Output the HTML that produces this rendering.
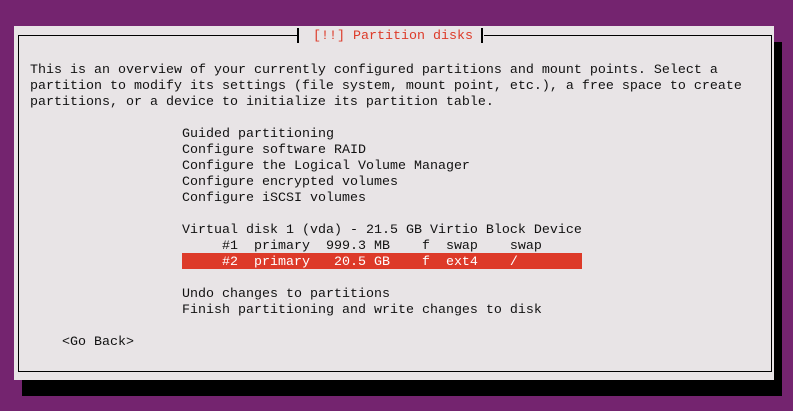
<!DOCTYPE html>
<html><head><meta charset="utf-8"><style>
*{margin:0;padding:0}
body{width:793px;height:411px;background:#74246f;position:relative;overflow:hidden;font-family:"Liberation Mono","DejaVu Sans Mono",monospace;font-size:13.33px;color:#111}
.sh{position:absolute;left:22px;top:42px;width:760px;height:354px;background:#000}
.pn{position:absolute;left:14px;top:26px;width:760px;height:354px;background:#e8e4e6}
.bd{position:absolute;left:18px;top:35px;width:752px;height:335px;border:1px solid #000}
.tk{position:absolute;top:28px;width:2px;height:15px;background:#000}
.tt{position:absolute;left:298px;top:27px;width:186px;height:16px;background:#e8e4e6}
.l{position:absolute;white-space:pre;line-height:16px;height:16px}
.t{padding-top:2px}
.hl{background:#dd3a29;color:#fff;width:400px;height:16px}
</style></head><body>
<div class="sh"></div>
<div class="pn"></div>
<div class="bd"></div>
<div class="tt"></div>
<div class="tk" style="left:297px"></div>
<div class="tk" style="left:481px"></div>
<div class="l" style="left:313px;top:29px;color:#dd3a29">[!!] Partition disks</div>
<div class="l" style="left:30px;top:63px">This is an overview of your currently configured partitions and mount points. Select a</div>
<div class="l" style="left:30px;top:79px">partition to modify its settings (file system, mount point, etc.), a free space to create</div>
<div class="l" style="left:30px;top:95px">partitions, or a device to initialize its partition table.</div>
<div class="l" style="left:182px;top:127px">Guided partitioning</div>
<div class="l" style="left:182px;top:143px">Configure software RAID</div>
<div class="l" style="left:182px;top:159px">Configure the Logical Volume Manager</div>
<div class="l" style="left:182px;top:175px">Configure encrypted volumes</div>
<div class="l" style="left:182px;top:191px">Configure iSCSI volumes</div>
<div class="l" style="left:182px;top:223px">Virtual disk 1 (vda) - 21.5 GB Virtio Block Device</div>
<div class="l" style="left:182px;top:239px">     #1  primary  999.3 MB    f  swap    swap</div>
<div style="position:absolute;left:182px;top:253px;width:400px;height:16px;background:#dd3a29"></div>
<div class="l" style="left:182px;top:255px;color:#fff">     #2  primary   20.5 GB    f  ext4    /</div>
<div class="l" style="left:182px;top:287px">Undo changes to partitions</div>
<div class="l" style="left:182px;top:303px">Finish partitioning and write changes to disk</div>
<div class="l" style="left:62px;top:335px">&lt;Go Back&gt;</div>
</body></html>
